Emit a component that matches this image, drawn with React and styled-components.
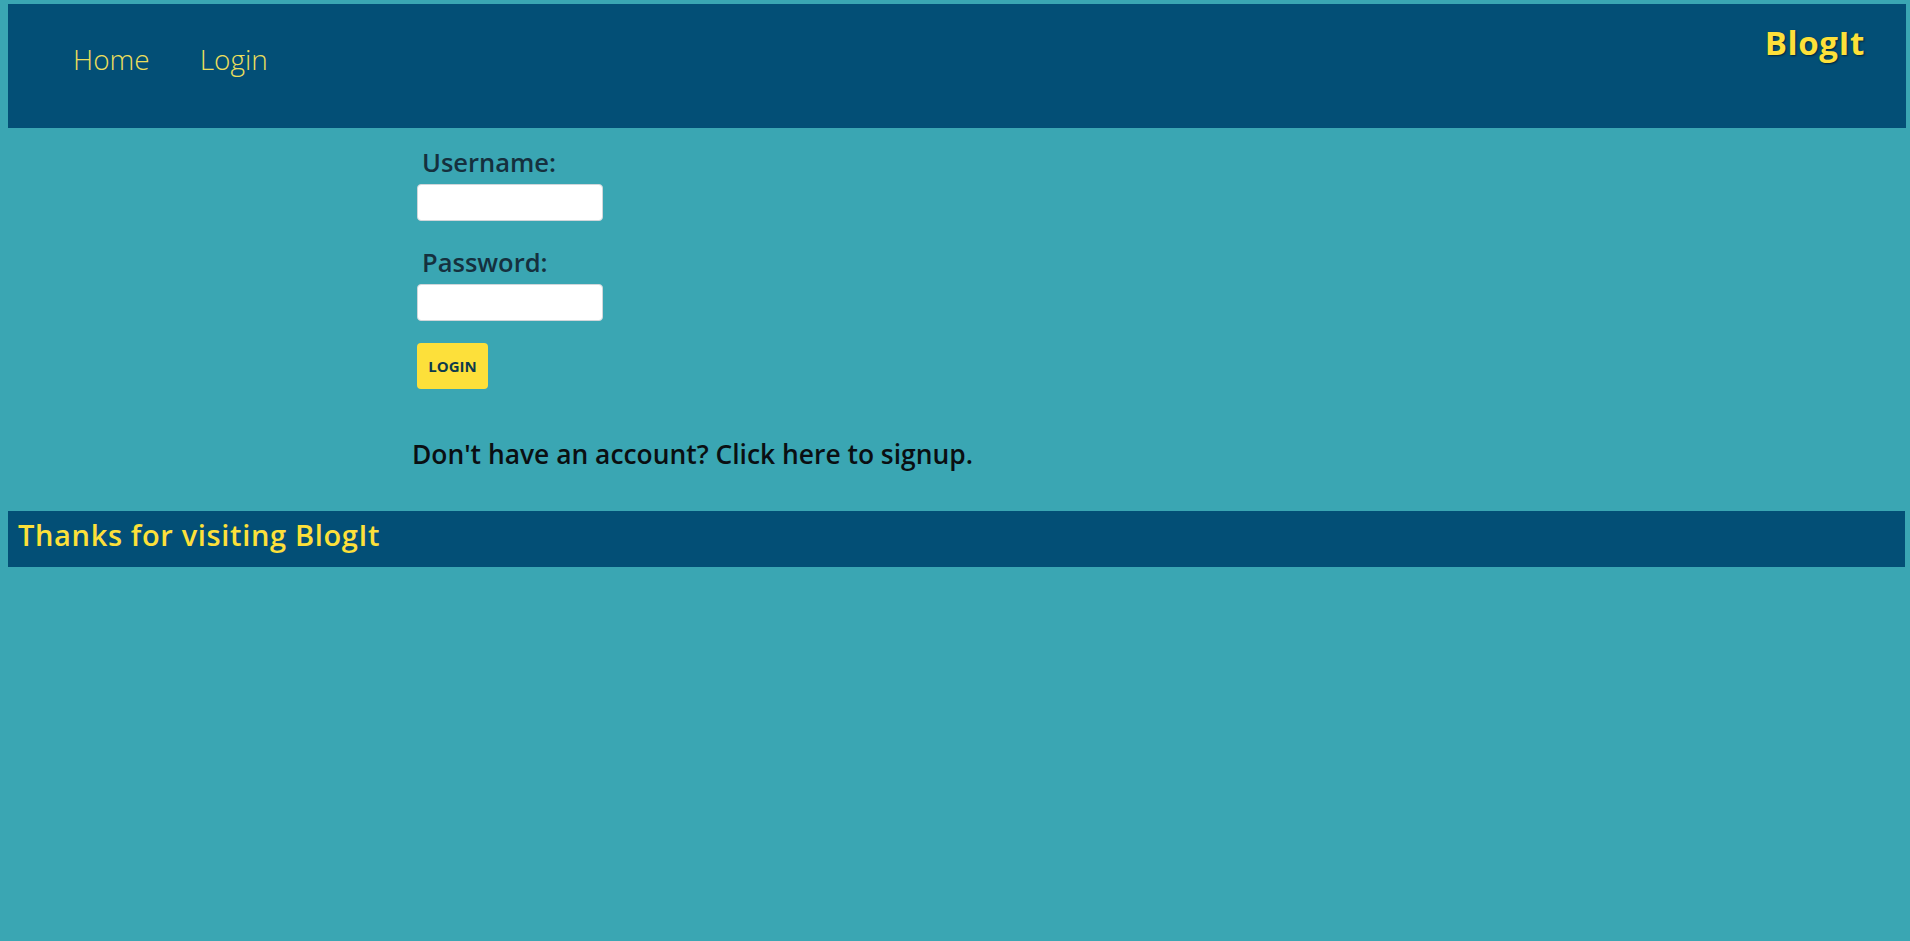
import React from "react";
import styled, { createGlobalStyle } from "styled-components";

const GlobalStyle = createGlobalStyle`
  html, body {
    margin: 0;
    padding: 0;
    background: #3aa6b3;
  }
  body {
    padding: 4px 4px 0 8px;
    min-height: 941px;
    box-sizing: border-box;
    font-family: "Open Sans", "Noto Sans", sans-serif;
  }
`;

const Header = styled.header`
  display: flex;
  justify-content: space-between;
  align-items: flex-start;
  height: 124px;
  background: #034f76;
  padding: 0 41px 0 65px;
  box-sizing: border-box;
`;

const Nav = styled.nav`
  display: flex;
  gap: 50px;
  margin-top: 41px;
`;

const NavLink = styled.a`
  font-size: 28px;
  font-weight: 300;
  line-height: 28px;
  color: #ecdf5c;
  text-decoration: none;
`;

const Brand = styled.h1`
  margin: 24px 0 0;
  font-size: 33px;
  font-weight: 700;
  line-height: 30px;
  letter-spacing: 0.6px;
  color: #fde03a;
  text-shadow: 1px 1px 2px rgba(0, 0, 0, 0.55);
`;

const Main = styled.main`
  padding: 21px 0 44px 409px;
`;

const Form = styled.form`
  display: flex;
  flex-direction: column;
  align-items: flex-start;
`;

const Field = styled.div`
  display: flex;
  flex-direction: column;
  align-items: flex-start;
  margin-bottom: ${(p) => p.$gap}px;
`;

const Label = styled.label`
  font-size: 25.5px;
  font-weight: 600;
  line-height: 26px;
  color: #15303e;
  padding-left: 5px;
  margin-bottom: 9px;
`;

const Input = styled.input`
  width: 186px;
  height: 37px;
  box-sizing: border-box;
  border: 1px solid #d0d6da;
  border-radius: 4px;
  background: #ffffff;
  margin: 0;
`;

const Button = styled.button`
  width: 71px;
  height: 46px;
  box-sizing: border-box;
  border: none;
  border-radius: 4px;
  background: #fde03a;
  color: #0e3a4c;
  font-family: "Open Sans", "Noto Sans", sans-serif;
  font-size: 15px;
  font-weight: 700;
  padding: 0;
  cursor: pointer;
`;

const Signup = styled.p`
  margin: 53px 0 0 -5px;
  font-size: 26.4px;
  font-weight: 600;
  line-height: 25px;
  color: #0a0f12;
`;

const Footer = styled.footer`
  height: 56px;
  box-sizing: border-box;
  background: #034f76;
  padding: 10px 0 0 10px;
  margin-right: 1px;
`;

const FooterText = styled.h2`
  margin: 0;
  font-size: 29px;
  font-weight: 600;
  line-height: 28px;
  letter-spacing: 0.65px;
  color: #fde03a;
`;

export default function App() {
  return (
    <>
      <GlobalStyle />
      <Header>
        <Nav>
          <NavLink href="#">Home</NavLink>
          <NavLink href="#">Login</NavLink>
        </Nav>
        <Brand>BlogIt</Brand>
      </Header>
      <Main>
        <Form onSubmit={(e) => e.preventDefault()}>
          <Field $gap={28}>
            <Label htmlFor="username">Username:</Label>
            <Input id="username" type="text" />
          </Field>
          <Field $gap={22}>
            <Label htmlFor="password">Password:</Label>
            <Input id="password" type="password" />
          </Field>
          <Button type="submit">LOGIN</Button>
        </Form>
        <Signup>Don't have an account? Click here to signup.</Signup>
      </Main>
      <Footer>
        <FooterText>Thanks for visiting BlogIt</FooterText>
      </Footer>
    </>
  );
}
